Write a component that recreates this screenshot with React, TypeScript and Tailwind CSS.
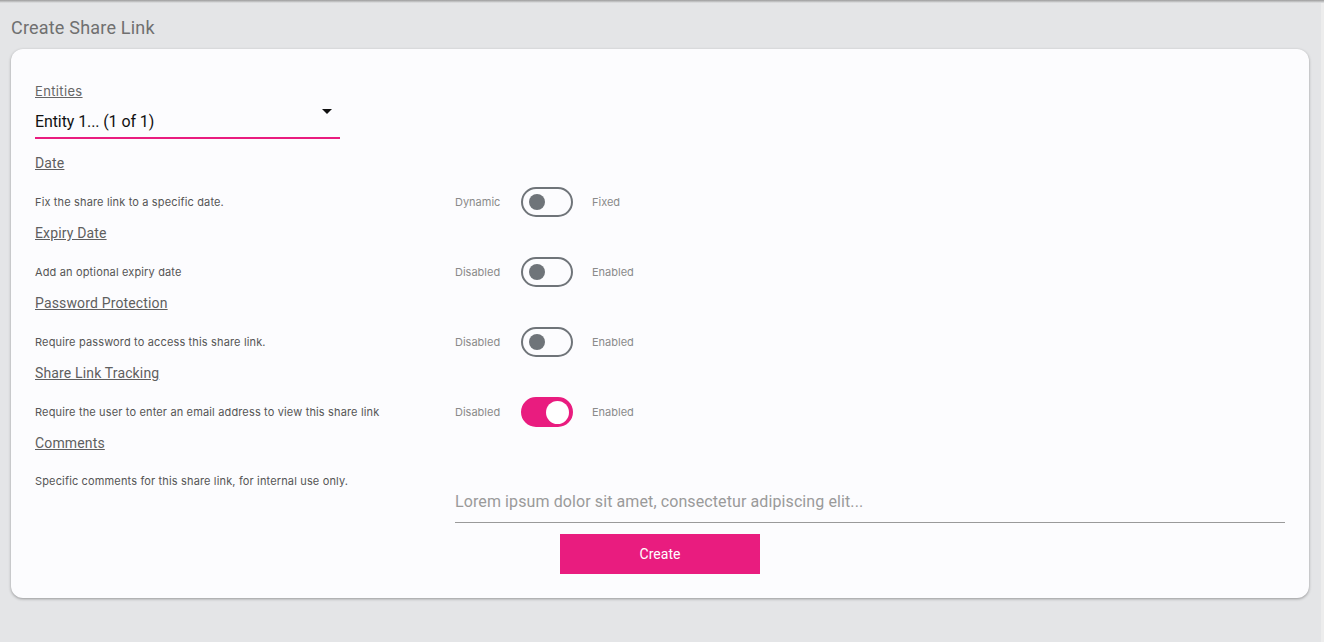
import { useState } from "react";

type ToggleRow = {
  title: string;
  description: string;
  off: string;
  on: string;
  value: boolean;
};

const rows: ToggleRow[] = [
  { title: "Date", description: "Fix the share link to a specific date.", off: "Dynamic", on: "Fixed", value: false },
  { title: "Expiry Date", description: "Add an optional expiry date", off: "Disabled", on: "Enabled", value: false },
  { title: "Password Protection", description: "Require password to access this share link.", off: "Disabled", on: "Enabled", value: false },
  { title: "Share Link Tracking", description: "Require the user to enter an email address to view this share link", off: "Disabled", on: "Enabled", value: true },
];

const inter = { fontFamily: "Inter, 'Liberation Sans', sans-serif" };

function Switch({ checked, onChange }: { checked: boolean; onChange: () => void }) {
  return (
    <button
      type="button"
      onClick={onChange}
      className={
        checked
          ? "w-[52px] h-[30px] rounded-full bg-[#e91c7f] border-2 border-[#e91c7f] flex items-center justify-end pr-[2px]"
          : "w-[52px] h-[30px] rounded-full bg-transparent border-2 border-[#6f7479] flex items-center justify-start pl-[6px]"
      }
    >
      {checked ? (
        <span className="w-[23px] h-[23px] rounded-full bg-white" />
      ) : (
        <span className="w-[16px] h-[16px] rounded-full bg-[#6f7479]" />
      )}
    </button>
  );
}

export default function App() {
  const [values, setValues] = useState(rows.map((r) => r.value));

  return (
    <div
      className="relative w-full h-screen bg-[#e4e5e7] flex overflow-hidden"
      style={{ fontFamily: "Roboto, 'Liberation Sans', sans-serif" }}
    >
      {/* header shadow */}
      <div className="absolute top-0 left-0 right-0 h-[3px] bg-gradient-to-b from-[#9c9c9c] to-[#e4e5e7]" />

      <div className="flex-1 flex flex-col pl-[11px] pr-[12px]">
        <h1 className="pt-[16px] h-[49px] text-[18px] leading-6 text-[#707070] tracking-[0.2px]">Create Share Link</h1>

        <div className="h-[549px] bg-[#fcfcfe] rounded-xl shadow-[0_1px_3px_rgba(0,0,0,0.35)] px-6 pt-[34px] pb-6 flex flex-col">
          {/* Entities */}
          <div className="text-[13px] leading-4 text-[#666] underline tracking-[0.35px]" style={inter}>Entities</div>
          <div className="relative mt-[4px] w-[305px] h-[36px] border-b-2 border-[#e91c7f] flex items-center">
            <span className="text-[16px] leading-6 text-[#111] pt-[3px] tracking-[-0.1px]">Entity 1... (1 of 1)</span>
            <span className="absolute right-[8px] top-[6px] w-0 h-0 border-l-[5px] border-r-[5px] border-t-[5px] border-l-transparent border-r-transparent border-t-[#111]" />
          </div>

          <div className="mt-[14px]">
            {rows.map((r, i) => (
              <div key={r.title} className="h-[70px] flex flex-col">
                <div className="h-[20px] text-[14px] leading-5 text-[#5f5f5f] underline tracking-[0.15px]">{r.title}</div>
                <div className="flex items-center pt-[14px]" style={inter}>
                  <div className="w-[420px] text-[11px] leading-4 text-[#555] tracking-[0.15px]">{r.description}</div>
                  <div className="w-[66px] text-[11px] leading-4 text-[#8a8a8a]">{r.off}</div>
                  <Switch
                    checked={values[i]}
                    onChange={() => setValues(values.map((v, j) => (j === i ? !v : v)))}
                  />
                  <div className="ml-[19px] text-[11px] leading-4 text-[#8a8a8a]">{r.on}</div>
                </div>
              </div>
            ))}

            {/* Comments */}
            <div className="h-[20px] text-[14px] leading-5 text-[#5f5f5f] underline tracking-[0.15px]">Comments</div>
            <div className="flex items-start">
              <div className="w-[420px] pt-[20px] text-[11px] leading-4 text-[#555] tracking-[0.15px]" style={inter}>
                Specific comments for this share link, for internal use only.
              </div>
              <div className="flex-1 pt-[37px] pb-[8px] border-b border-[#9a9a9a] text-[16px] leading-6 text-[#9a9a9a] tracking-[0.1px]">
                Lorem ipsum dolor sit amet, consectetur adipiscing elit...
              </div>
            </div>
          </div>

          <div className="flex justify-center mt-[11px]">
            <button type="button" className="w-[200px] h-[40px] bg-[#e91c7f] text-white text-[14px]">
              Create
            </button>
          </div>
        </div>
      </div>

      {/* scrollbar gutter */}
      <div className="w-[3px] h-full bg-[#ededed]" />
    </div>
  );
}
